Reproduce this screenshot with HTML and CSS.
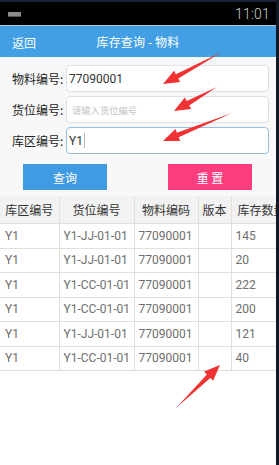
FILE: index.html
```html
<!DOCTYPE html>
<html lang="zh">
<head>
<meta charset="utf-8">
<link rel="stylesheet" href="styles.css">
</head>
<body>
<div class="app">
  <div class="statusbar">
    <span class="sb-icon"></span>
    <span class="sb-time">11:01</span>
  </div>
  <div class="titlebar">
    <span class="back">返回</span>
    <span class="title">库存查询 - 物料</span>
  </div>
  <div class="form">
    <div class="row">
      <label class="lbl">物料编号:</label>
      <div class="input">77090001</div>
    </div>
    <div class="row">
      <label class="lbl">货位编号:</label>
      <div class="input placeholder">请输入货位编号</div>
    </div>
    <div class="row">
      <label class="lbl">库区编号:</label>
      <div class="input focused">Y1<span class="caret"></span></div>
    </div>
    <div class="buttons">
      <button class="btn btn-query">查询</button>
      <button class="btn btn-reset">重 置</button>
    </div>
  </div>
  <div class="table-wrap">
    <table class="grid">
      <colgroup>
        <col class="c1"><col class="c2"><col class="c3"><col class="c4"><col class="c5">
      </colgroup>
      <thead>
        <tr><th>库区编号</th><th>货位编号</th><th>物料编码</th><th>版本</th><th>库存数量</th></tr>
      </thead>
      <tbody>
        <tr><td>Y1</td><td>Y1-JJ-01-01</td><td>77090001</td><td></td><td>145</td></tr>
        <tr><td>Y1</td><td>Y1-JJ-01-01</td><td>77090001</td><td></td><td>20</td></tr>
        <tr><td>Y1</td><td>Y1-CC-01-01</td><td>77090001</td><td></td><td>222</td></tr>
        <tr><td>Y1</td><td>Y1-CC-01-01</td><td>77090001</td><td></td><td>200</td></tr>
        <tr><td>Y1</td><td>Y1-JJ-01-01</td><td>77090001</td><td></td><td>121</td></tr>
        <tr><td>Y1</td><td>Y1-CC-01-01</td><td>77090001</td><td></td><td>40</td></tr>
      </tbody>
    </table>
  </div>
  <svg class="arrows" width="276" height="465" viewBox="0 0 276 465">
    <polygon points="222,52 175.9,74.2 174.0,70.7 163,84 180.2,82.1 178.3,78.6"/>
    <polygon points="217,87 186.8,101.0 184.8,97.5 174,111 191.2,108.9 189.2,105.4"/>
    <polygon points="232,113 176.9,132.7 175.4,129.0 163,141 180.2,141.0 178.7,137.3"/>
    <polygon points="176,408 210.3,378.0 213.1,380.8 220,365 204.1,371.6 206.9,374.4"/>
  </svg>
</div>
</body>
</html>
```

FILE: styles.css
```css
html, body {
  margin: 0;
  padding: 0;
}
body {
  width: 279px;
  height: 465px;
  background: #121826;
  overflow: hidden;
  font-family: "Roboto", "Noto Sans CJK SC", sans-serif;
}
.app {
  position: relative;
  width: 276px;
  height: 465px;
  background: #ffffff;
  overflow: hidden;
}
.statusbar {
  height: 23px;
  background: #000;
  border-top: 2px solid #1b2136;
  border-bottom: 1px solid #bcc4cc;
  display: flex;
  align-items: center;
  justify-content: space-between;
  padding: 0 6px 0 8px;
}
.sb-icon {
  width: 13px;
  height: 4px;
  background: #8a8a8a;
  border-bottom: 1px solid #555;
  margin-top: 2px;
}
.sb-time {
  color: #cfcfcf;
  font-family: "Roboto", sans-serif;
  font-weight: 300;
  font-size: 14px;
  letter-spacing: 0.2px;
}
.titlebar {
  position: relative;
  height: 31px;
  background: #429fe3;
  display: flex;
  align-items: center;
  justify-content: center;
  color: #fff;
  font-size: 12px;
}
.back {
  position: absolute;
  left: 12px;
  top: 8px;
}
.title {
  letter-spacing: 0.2px;
}
.form {
  background: #f8f8f8;
  padding: 8px 7px 6px 12px;
  display: flex;
  flex-direction: column;
  gap: 4px;
}
.row {
  display: flex;
  align-items: center;
  height: 27px;
}
.lbl {
  width: 54px;
  font-size: 12px;
  color: #222;
  font-family: "Noto Sans CJK SC", sans-serif;
}
.input {
  flex: 1;
  height: 25px;
  box-sizing: border-box;
  height: 27px;
  background: #fff;
  border: 1px solid #dde1e6;
  border-radius: 4px;
  display: flex;
  align-items: center;
  padding-left: 2px;
  font-size: 12px;
  color: #333;
}
.input.placeholder {
  color: #c4c4c4;
  font-size: 9.3px;
  padding-left: 5px;
}
.input.focused {
  border-color: #96bfe4;
}
.caret {
  display: inline-block;
  width: 1px;
  height: 15px;
  background: #bbb;
  margin-left: 1px;
}
.buttons {
  display: flex;
  justify-content: space-between;
  padding: 6px 17px 0 11px;
}
.btn {
  width: 84px;
  height: 26px;
  border: 0;
  color: #fff;
  font-size: 12px;
  font-family: "Noto Sans CJK SC", sans-serif;
  padding: 0;
}
.btn-query {
  background: #3f9ce2;
}
.btn-reset {
  background: #fe3d7e;
}
.table-wrap {
  width: 276px;
  overflow: hidden;
  background: #f8f8f8;
}
.grid {
  table-layout: fixed;
  border-collapse: collapse;
  width: 292px;
  background: #fff;
}
.c1 { width: 59px; }
.c2 { width: 75px; }
.c3 { width: 64px; }
.c4 { width: 33px; }
.c5 { width: 61px; }
.grid th {
  height: 27px;
  background: #f2f2f2;
  font-weight: normal;
  font-size: 12px;
  color: #333;
  font-family: "Noto Sans CJK SC", sans-serif;
  border-right: 1px solid #e2dfd8;
  border-bottom: 1px solid #e2dfd8;
  padding: 0;
  white-space: nowrap;
  overflow: hidden;
}
.grid td {
  height: 23.5px;
  padding: 0 0 0 4px;
  font-size: 12px;
  color: #6e6e6e;
  border-right: 1px solid #e2dfd8;
  border-bottom: 1px solid #e2dfd8;
  white-space: nowrap;
  overflow: hidden;
}
.grid td:first-child {
  padding-left: 5px;
}
.arrows {
  position: absolute;
  left: 0;
  top: 0;
  pointer-events: none;
}
.arrows polygon {
  fill: #f03232;
}
```
